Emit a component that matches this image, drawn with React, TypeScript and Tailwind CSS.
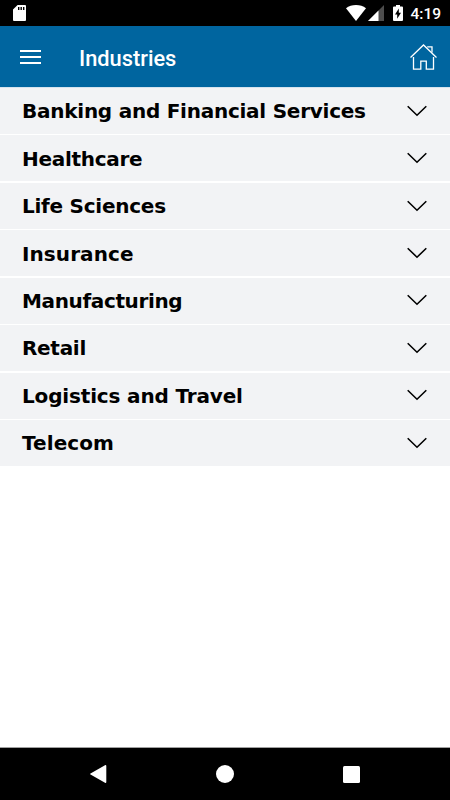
const INDUSTRIES = [
  { name: 'Banking and Financial Services', tracking: 'tracking-[-0.25px]' },
  { name: 'Healthcare', tracking: 'tracking-[-0.3px]' },
  { name: 'Life Sciences', tracking: 'tracking-[-0.25px]' },
  { name: 'Insurance', tracking: 'tracking-[0.08px]' },
  { name: 'Manufacturing', tracking: 'tracking-[-0.36px]' },
  { name: 'Retail', tracking: 'tracking-[-0.3px]' },
  { name: 'Logistics and Travel', tracking: 'tracking-[-0.16px]' },
  { name: 'Telecom', tracking: 'tracking-[0.08px]' },
];

function StatusBar() {
  return (
    <div className="flex h-[26px] shrink-0 items-start bg-black pl-[13px] pr-[9px] text-white">
      <svg className="mt-[5px] h-4 w-[13px]" viewBox="0 0 13 16" fill="currentColor">
        <path d="M4.6 0H12q1 0 1 1v14q0 1-1 1H1q-1 0-1-1V4.6z" />
        <path d="M5 2h1.4v3H5zM7.5 2h1.4v3H7.5zM10 2h1.4v3H10z" fill="#000" />
      </svg>
      <div className="ml-auto flex items-start">
        <svg className="mt-[5px] h-4 w-5" viewBox="0 0 20 16" fill="currentColor">
          <path d="M0 3.3Q4.2 0 10 0t10 3.3L10 16z" />
        </svg>
        <svg className="ml-[2px] mt-[5px] h-4 w-4" viewBox="0 0 16 16" fill="currentColor">
          <path d="M16 0v16H0z" opacity=".3" />
          <path d="M10.5 5.5V16H0z" />
        </svg>
        <svg className="ml-[9px] mt-[5px] h-4 w-[10px]" viewBox="0 0 10 16" fill="currentColor">
          <path d="M3 0h4v1.5h2q1 0 1 1V15q0 1-1 1H1q-1 0-1-1V2.5q0-1 1-1h2z" />
          <path d="M5.8 3.5v4.2h2.2L4.2 13.8V9.5H2z" fill="#000" />
        </svg>
        <span className="ml-[7px] mt-[5px] font-[Roboto,sans-serif] text-[15.5px] leading-[18px] font-medium">
          4:19
        </span>
      </div>
    </div>
  );
}

function Header() {
  return (
    <header className="flex h-[61px] shrink-0 items-center bg-[#00659f] pl-5 pr-[13px] text-white">
      <button aria-label="Menu" className="flex w-[21px] flex-col gap-[4px]">
        <span className="h-[2px] bg-white" />
        <span className="h-[2px] bg-white" />
        <span className="h-[2px] bg-white" />
      </button>
      <h1 className="ml-[38px] mt-[4px] font-[Roboto,sans-serif] text-[21.8px] leading-7 font-medium">
        Industries
      </h1>
      <button aria-label="Home" className="ml-auto">
        <svg
          className="h-[26px] w-[27px]"
          viewBox="0 0 27 26"
          fill="none"
          stroke="currentColor"
          strokeWidth="1.3"
        >
          <path d="M.5 13.5 13.5 1l13 12.5" />
          <path d="M3.5 13v12.2h7.3v-8h5.5v8h7.2V13" />
          <path d="M17.2 2.8h4.8v5.6" />
        </svg>
      </button>
    </header>
  );
}

function NavigationBar() {
  return (
    <nav className="flex h-[53px] shrink-0 items-center justify-between border-t border-[#a0a0a0] bg-black pl-[90px] pr-[90px] text-white">
      <svg className="h-[18px] w-[17px]" viewBox="0 0 17 18" fill="currentColor">
        <path d="M.5 8.4 15 .3q1.3-.6 1.3.8v15.8q0 1.4-1.3.8L.5 9.6q-.8-.6 0-1.2z" />
      </svg>
      <span className="h-[18px] w-[18px] rounded-full bg-white" />
      <span className="h-[17px] w-[17px] rounded-[1.5px] bg-white" />
    </nav>
  );
}

export default function App() {
  return (
    <div className="flex h-[800px] w-[450px] flex-col overflow-hidden bg-white">
      <StatusBar />
      <Header />
      <main className="flex-1 border-t border-[#d5e3ee]">
        <ul className="flex flex-col gap-[1.9px]">
          {INDUSTRIES.map((industry) => (
            <li
              key={industry.name}
              className="flex h-[45.6px] items-center justify-between bg-[#f2f3f5] pl-[22px] pr-[23px]"
            >
              <span
                className={`mt-[0.5px] font-[Verdana,'DejaVu_Sans',sans-serif] text-[20px] leading-6 font-bold text-black ${industry.tracking}`}
              >
                {industry.name}
              </span>
              <svg
                className="mb-[0.5px] h-3 w-5"
                viewBox="0 0 20 12"
                fill="none"
                stroke="#000"
                strokeWidth="1.6"
              >
                <path d="m.7 1.2 9.3 9 9.3-9" />
              </svg>
            </li>
          ))}
        </ul>
      </main>
      <NavigationBar />
    </div>
  );
}
